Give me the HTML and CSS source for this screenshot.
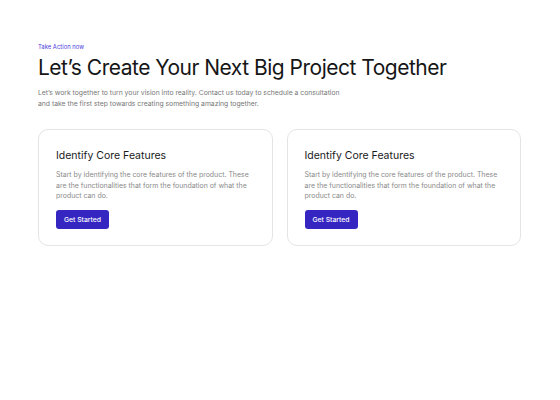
FILE: index.html
```html
<!DOCTYPE html>
<html>
<head>
<meta charset="utf-8">
<link rel="stylesheet" href="styles.css">
</head>
<body>
<main class="page">
  <header class="intro">
    <p class="eyebrow">Take Action now</p>
    <h1 class="title">Let’s Create Your Next Big Project Together</h1>
    <p class="lead">Let’s work together to turn your vision into reality. Contact us today to schedule a consultation<br>and take the first step towards creating something amazing together.</p>
  </header>
  <section class="cards">
    <article class="card">
      <h2 class="card-title">Identify Core Features</h2>
      <p class="card-text">Start by identifying the core features of the product. These are the functionalities that form the foundation of what the product can do.</p>
      <a class="btn">Get Started</a>
    </article>
    <article class="card">
      <h2 class="card-title">Identify Core Features</h2>
      <p class="card-text">Start by identifying the core features of the product. These are the functionalities that form the foundation of what the product can do.</p>
      <a class="btn">Get Started</a>
    </article>
  </section>
</main>
</body>
</html>
```

FILE: styles.css
```css
* { box-sizing: border-box; }
html, body { margin: 0; padding: 0; background: #ffffff; }
body { font-family: Inter, "Open Sans", sans-serif; color: #1a1a1a; }
.page { padding: 43px 39px 0 38px; }
.intro { display: flex; flex-direction: column; }
.eyebrow { margin: 0; font-size: 5.9px; line-height: 8px; color: #4b3bdc; }
.title { margin: 3px 0 0 0; font-size: 21px; line-height: 28px; font-weight: 400; letter-spacing: -0.5px; color: #161616; }
.lead { margin: 6px 0 0 0; font-size: 6.8px; line-height: 10.5px; color: #777777; }
.cards { display: grid; grid-template-columns: 1fr 1fr; gap: 14px; margin-top: 20px; }
.card { border: 1px solid #e4e4e4; border-radius: 10px; padding: 18px 17px 16px 17px; display: flex; flex-direction: column; align-items: flex-start; }
.card-title { margin: 0; font-size: 10.5px; line-height: 15px; font-weight: 400; color: #1a1a1a; }
.card-text { margin: 7px 0 0 0; font-size: 6.95px; line-height: 10.5px; color: #8a8a8a; }
.btn { margin-top: 8px; display: inline-flex; align-items: center; justify-content: center; width: 53px; height: 19px; border-radius: 3px; background: #3526c2; color: #ffffff; font-size: 6.8px; font-weight: 500; }
```
